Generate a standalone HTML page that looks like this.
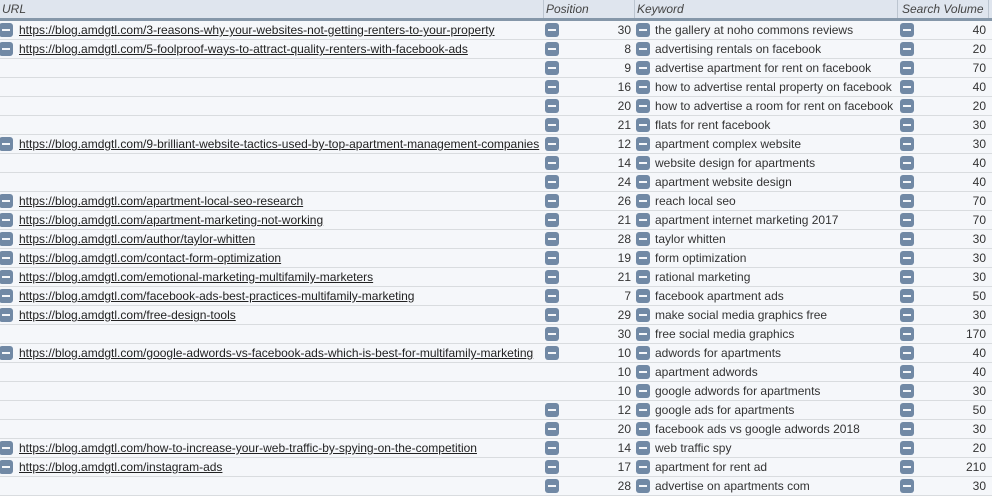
<!DOCTYPE html>
<html><head><meta charset="utf-8"><style>
html,body{margin:0;padding:0;background:#f5f7fa}
body{width:992px;height:496px;overflow:hidden;position:relative;font-family:"Liberation Sans",sans-serif;font-size:12px;color:#333}
.hd{position:absolute;left:0;top:0;width:992px;height:18px;background:#dfe5ee}
.bar{position:absolute;left:0;top:18px;width:992px;height:3px;background:#8597a9}
.h{position:absolute;top:2px;line-height:15px;font-style:italic;color:#444;white-space:nowrap}
.sep{position:absolute;top:0;width:1px;height:18px;background:#bcc5d0}
.r{position:absolute;left:0;width:992px;height:19px;border-bottom:1px solid #d9dcdf;box-sizing:border-box}
.r>*{position:absolute}
.i{top:2px;width:14px;height:14px;border-radius:3px;background:#7189a5}
.i::after{content:"";position:absolute;left:3px;top:6px;width:8px;height:2px;background:#f4f6f9}
.u{left:19px;top:2px;line-height:15px;color:#222;text-decoration:underline;white-space:nowrap}
.p{left:560px;width:71px;top:2px;line-height:15px;text-align:right}
.k{left:655px;top:2px;line-height:15px;white-space:nowrap}
.v{left:915px;width:71px;top:2px;line-height:15px;text-align:right}
.a{left:-1px}.b{left:545px}.c{left:636px}.d{left:900px}
</style></head><body>
<div class="hd"></div><div class="bar"></div>
<div class="h" style="left:2px">URL</div><div class="sep" style="left:543px"></div>
<div class="h" style="left:546px">Position</div><div class="sep" style="left:634px"></div>
<div class="h" style="left:637px">Keyword</div><div class="sep" style="left:897px"></div>
<div class="h" style="left:902px">Search Volume</div><div class="sep" style="left:988px"></div>

<div class="r" style="top:21px"><i class="i a"></i><span class="u">https://blog.amdgtl.com/3-reasons-why-your-websites-not-getting-renters-to-your-property</span><i class="i b"></i><span class="p">30</span><i class="i c"></i><span class="k">the gallery at noho commons reviews</span><i class="i d"></i><span class="v">40</span></div>
<div class="r" style="top:40px"><i class="i a"></i><span class="u">https://blog.amdgtl.com/5-foolproof-ways-to-attract-quality-renters-with-facebook-ads</span><i class="i b"></i><span class="p">8</span><i class="i c"></i><span class="k">advertising rentals on facebook</span><i class="i d"></i><span class="v">20</span></div>
<div class="r" style="top:59px"><i class="i b"></i><span class="p">9</span><i class="i c"></i><span class="k">advertise apartment for rent on facebook</span><i class="i d"></i><span class="v">70</span></div>
<div class="r" style="top:78px"><i class="i b"></i><span class="p">16</span><i class="i c"></i><span class="k">how to advertise rental property on facebook</span><i class="i d"></i><span class="v">40</span></div>
<div class="r" style="top:97px"><i class="i b"></i><span class="p">20</span><i class="i c"></i><span class="k">how to advertise a room for rent on facebook</span><i class="i d"></i><span class="v">20</span></div>
<div class="r" style="top:116px"><i class="i b"></i><span class="p">21</span><i class="i c"></i><span class="k">flats for rent facebook</span><i class="i d"></i><span class="v">30</span></div>
<div class="r" style="top:135px"><i class="i a"></i><span class="u">https://blog.amdgtl.com/9-brilliant-website-tactics-used-by-top-apartment-management-companies</span><i class="i b"></i><span class="p">12</span><i class="i c"></i><span class="k">apartment complex website</span><i class="i d"></i><span class="v">30</span></div>
<div class="r" style="top:154px"><i class="i b"></i><span class="p">14</span><i class="i c"></i><span class="k">website design for apartments</span><i class="i d"></i><span class="v">40</span></div>
<div class="r" style="top:173px"><i class="i b"></i><span class="p">24</span><i class="i c"></i><span class="k">apartment website design</span><i class="i d"></i><span class="v">40</span></div>
<div class="r" style="top:192px"><i class="i a"></i><span class="u">https://blog.amdgtl.com/apartment-local-seo-research</span><i class="i b"></i><span class="p">26</span><i class="i c"></i><span class="k">reach local seo</span><i class="i d"></i><span class="v">70</span></div>
<div class="r" style="top:211px"><i class="i a"></i><span class="u">https://blog.amdgtl.com/apartment-marketing-not-working</span><i class="i b"></i><span class="p">21</span><i class="i c"></i><span class="k">apartment internet marketing 2017</span><i class="i d"></i><span class="v">70</span></div>
<div class="r" style="top:230px"><i class="i a"></i><span class="u">https://blog.amdgtl.com/author/taylor-whitten</span><i class="i b"></i><span class="p">28</span><i class="i c"></i><span class="k">taylor whitten</span><i class="i d"></i><span class="v">30</span></div>
<div class="r" style="top:249px"><i class="i a"></i><span class="u">https://blog.amdgtl.com/contact-form-optimization</span><i class="i b"></i><span class="p">19</span><i class="i c"></i><span class="k">form optimization</span><i class="i d"></i><span class="v">30</span></div>
<div class="r" style="top:268px"><i class="i a"></i><span class="u">https://blog.amdgtl.com/emotional-marketing-multifamily-marketers</span><i class="i b"></i><span class="p">21</span><i class="i c"></i><span class="k">rational marketing</span><i class="i d"></i><span class="v">30</span></div>
<div class="r" style="top:287px"><i class="i a"></i><span class="u">https://blog.amdgtl.com/facebook-ads-best-practices-multifamily-marketing</span><i class="i b"></i><span class="p">7</span><i class="i c"></i><span class="k">facebook apartment ads</span><i class="i d"></i><span class="v">50</span></div>
<div class="r" style="top:306px"><i class="i a"></i><span class="u">https://blog.amdgtl.com/free-design-tools</span><i class="i b"></i><span class="p">29</span><i class="i c"></i><span class="k">make social media graphics free</span><i class="i d"></i><span class="v">30</span></div>
<div class="r" style="top:325px"><i class="i b"></i><span class="p">30</span><i class="i c"></i><span class="k">free social media graphics</span><i class="i d"></i><span class="v">170</span></div>
<div class="r" style="top:344px"><i class="i a"></i><span class="u">https://blog.amdgtl.com/google-adwords-vs-facebook-ads-which-is-best-for-multifamily-marketing</span><i class="i b"></i><span class="p">10</span><i class="i c"></i><span class="k">adwords for apartments</span><i class="i d"></i><span class="v">40</span></div>
<div class="r" style="top:363px"><span class="p">10</span><i class="i c"></i><span class="k">apartment adwords</span><i class="i d"></i><span class="v">40</span></div>
<div class="r" style="top:382px"><span class="p">10</span><i class="i c"></i><span class="k">google adwords for apartments</span><i class="i d"></i><span class="v">30</span></div>
<div class="r" style="top:401px"><i class="i b"></i><span class="p">12</span><i class="i c"></i><span class="k">google ads for apartments</span><i class="i d"></i><span class="v">50</span></div>
<div class="r" style="top:420px"><i class="i b"></i><span class="p">20</span><i class="i c"></i><span class="k">facebook ads vs google adwords 2018</span><i class="i d"></i><span class="v">30</span></div>
<div class="r" style="top:439px"><i class="i a"></i><span class="u">https://blog.amdgtl.com/how-to-increase-your-web-traffic-by-spying-on-the-competition</span><i class="i b"></i><span class="p">14</span><i class="i c"></i><span class="k">web traffic spy</span><i class="i d"></i><span class="v">20</span></div>
<div class="r" style="top:458px"><i class="i a"></i><span class="u">https://blog.amdgtl.com/instagram-ads</span><i class="i b"></i><span class="p">17</span><i class="i c"></i><span class="k">apartment for rent ad</span><i class="i d"></i><span class="v">210</span></div>
<div class="r" style="top:477px"><i class="i b"></i><span class="p">28</span><i class="i c"></i><span class="k">advertise on apartments com</span><i class="i d"></i><span class="v">30</span></div>
</body></html>
